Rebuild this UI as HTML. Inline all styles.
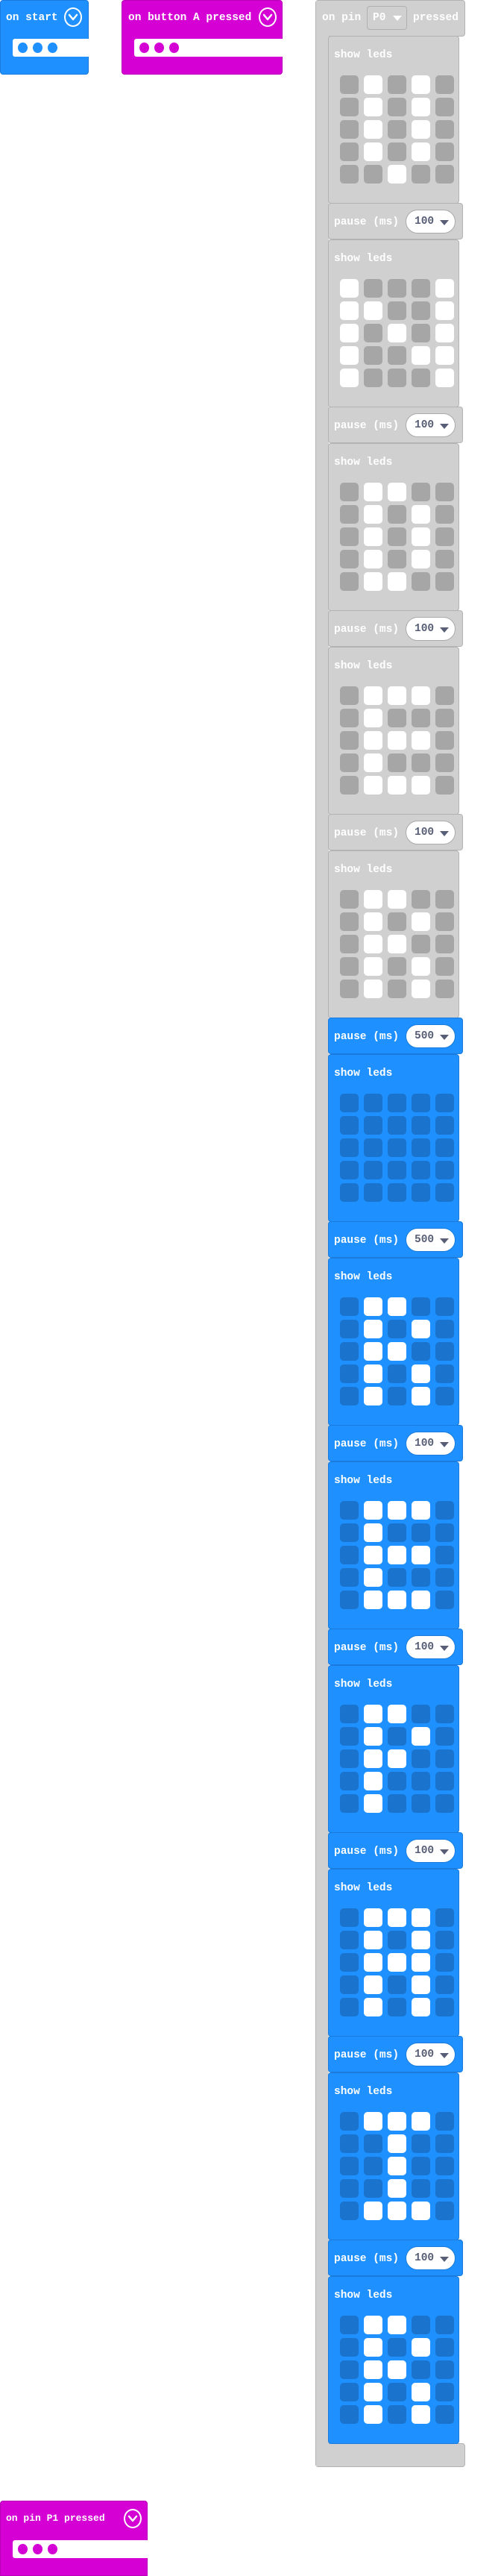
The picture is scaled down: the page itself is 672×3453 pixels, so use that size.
<!DOCTYPE html>
<html><head><meta charset="utf-8"><style>
*{margin:0;padding:0;box-sizing:border-box}
body{width:672px;height:3453px;background:#fff;position:relative;overflow:hidden;font-family:"Liberation Mono",monospace;font-weight:bold;font-size:14.5px;color:#fff}
.a{position:absolute}
.hat{position:absolute;border-radius:4px}
.t{position:absolute;white-space:nowrap;line-height:18px}
.slot{position:absolute;background:#fff;border-radius:3px 0 0 3px}
.dot{position:absolute;width:13px;height:14px;border-radius:50%}
.circ{position:absolute;width:24px;height:26px;border:2.5px solid #fff;border-radius:50%}
.circ svg{position:absolute;left:3px;top:4px}
.g{background:#d0d0d0;border:1px solid #b3b3b3}
.bl{background:#1e90ff;border:1px solid #1a7bdc}
.sl{position:absolute;left:440px;width:176px;height:225px;border-radius:4px}
.pa{position:absolute;left:440px;width:181px;height:49px;border-radius:4px}
.sl .t{left:7px;top:16px}
.pa .t{left:7px;top:16px}
.grid{position:absolute;left:15px;top:52px;display:grid;grid-template-columns:repeat(5,25px);column-gap:7px;row-gap:5px}
.grid i,.grid b{display:block;width:25px;height:25px;border-radius:5px}
.g .grid i{background:#a6a6a6}
.bl .grid i{background:#1a73cc}
.grid b{background:#fff}
.pill{position:absolute;left:103px;top:8px;width:67px;height:32px;border-radius:16px;background:#fff;border:1px solid #aaa}
.bl .pill{border-color:#1a7bdc}
.pill span{position:absolute;left:11px;top:6px;color:#575e75;line-height:18px}
.pill em{position:absolute;left:45px;top:13px;width:0;height:0;border-left:6px solid transparent;border-right:6px solid transparent;border-top:7px solid #575e75}
.notch{position:absolute;left:15px;top:-1px;width:30px;height:7px}
</style></head><body>

<!-- on start -->
<div class="hat" style="left:0;top:0;width:119px;height:100px;background:#1e90ff;border:1px solid #1a7bdc"></div>
<div class="t" style="left:8px;top:15px">on start</div>
<div class="circ" style="left:86px;top:10px"><svg width="14" height="14" viewBox="0 0 14 14"><path d="M2 4 L7 10 L12 4" stroke="#fff" stroke-width="2.5" fill="none" stroke-linecap="round" stroke-linejoin="round"/></svg></div>
<div class="slot" style="left:17px;top:52px;width:102px;height:24px"></div>
<div class="dot" style="left:24px;top:57px;background:#1e90ff"></div>
<div class="dot" style="left:44px;top:57px;background:#1e90ff"></div>
<div class="dot" style="left:64px;top:57px;background:#1e90ff"></div>

<!-- on button A pressed -->
<div class="hat" style="left:163px;top:0;width:216px;height:100px;background:#d400d4;border:1px solid #b800b8"></div>
<div class="t" style="left:172px;top:15px">on button A pressed</div>
<div class="circ" style="left:347px;top:10px"><svg width="14" height="14" viewBox="0 0 14 14"><path d="M2 4 L7 10 L12 4" stroke="#fff" stroke-width="2.5" fill="none" stroke-linecap="round" stroke-linejoin="round"/></svg></div>
<div class="slot" style="left:180px;top:52px;width:199px;height:24px"></div>
<div class="dot" style="left:187px;top:57px;background:#d400d4"></div>
<div class="dot" style="left:207px;top:57px;background:#d400d4"></div>
<div class="dot" style="left:227px;top:57px;background:#d400d4"></div>

<!-- on pin P0 pressed stack -->
<div class="a g" style="left:423px;top:0;width:201px;height:49px;border-radius:4px"></div>
<div class="a g" style="left:423px;top:0;width:18px;height:3307px;border-right:none;border-radius:4px 0 0 4px"></div>
<div class="a g" style="left:423px;top:3275px;width:201px;height:32px;border-radius:0 4px 4px 4px;border-top:1px solid #b3b3b3"></div>
<div class="a" style="left:424px;top:1px;width:17px;height:3305px;background:#d0d0d0"></div>
<div class="t" style="left:432px;top:15px">on pin</div>
<div class="a" style="left:492px;top:8px;width:54px;height:32px;border:1px solid #b0b0b0;border-radius:4px"></div>
<div class="t" style="left:500px;top:15px">P0</div>
<div class="a" style="left:527px;top:21px;width:0;height:0;border-left:6px solid transparent;border-right:6px solid transparent;border-top:7px solid #fff"></div>
<div class="t" style="left:554px;top:15px">pressed</div>

<!-- 1 V -->
<div class="sl g" style="top:48px"><div class="t">show leds</div><div class="grid">
<i></i><b></b><i></i><b></b><i></i>
<i></i><b></b><i></i><b></b><i></i>
<i></i><b></b><i></i><b></b><i></i>
<i></i><b></b><i></i><b></b><i></i>
<i></i><i></i><b></b><i></i><i></i>
</div></div>
<div class="pa g" style="top:272px"><div class="t">pause (ms)</div><div class="pill"><span>100</span><em></em></div></div>

<!-- 2 N -->
<div class="sl g" style="top:321px"><div class="t">show leds</div><div class="grid">
<b></b><i></i><i></i><i></i><b></b>
<b></b><b></b><i></i><i></i><b></b>
<b></b><i></i><b></b><i></i><b></b>
<b></b><i></i><i></i><b></b><b></b>
<b></b><i></i><i></i><i></i><b></b>
</div></div>
<div class="pa g" style="top:545px"><div class="t">pause (ms)</div><div class="pill"><span>100</span><em></em></div></div>

<!-- 3 D -->
<div class="sl g" style="top:594px"><div class="t">show leds</div><div class="grid">
<i></i><b></b><b></b><i></i><i></i>
<i></i><b></b><i></i><b></b><i></i>
<i></i><b></b><i></i><b></b><i></i>
<i></i><b></b><i></i><b></b><i></i>
<i></i><b></b><b></b><i></i><i></i>
</div></div>
<div class="pa g" style="top:818px"><div class="t">pause (ms)</div><div class="pill"><span>100</span><em></em></div></div>

<!-- 4 E -->
<div class="sl g" style="top:867px"><div class="t">show leds</div><div class="grid">
<i></i><b></b><b></b><b></b><i></i>
<i></i><b></b><i></i><i></i><i></i>
<i></i><b></b><b></b><b></b><i></i>
<i></i><b></b><i></i><i></i><i></i>
<i></i><b></b><b></b><b></b><i></i>
</div></div>
<div class="pa g" style="top:1091px"><div class="t">pause (ms)</div><div class="pill"><span>100</span><em></em></div></div>

<!-- 5 R -->
<div class="sl g" style="top:1140px"><div class="t">show leds</div><div class="grid">
<i></i><b></b><b></b><i></i><i></i>
<i></i><b></b><i></i><b></b><i></i>
<i></i><b></b><b></b><i></i><i></i>
<i></i><b></b><i></i><b></b><i></i>
<i></i><b></b><i></i><b></b><i></i>
</div></div>
<div class="pa bl" style="top:1364px"><div class="t">pause (ms)</div><div class="pill"><span>500</span><em></em></div></div>

<!-- 6 blank -->
<div class="sl bl" style="top:1413px"><div class="t">show leds</div><div class="grid">
<i></i><i></i><i></i><i></i><i></i>
<i></i><i></i><i></i><i></i><i></i>
<i></i><i></i><i></i><i></i><i></i>
<i></i><i></i><i></i><i></i><i></i>
<i></i><i></i><i></i><i></i><i></i>
</div></div>
<div class="pa bl" style="top:1637px"><div class="t">pause (ms)</div><div class="pill"><span>500</span><em></em></div></div>

<!-- 7 R -->
<div class="sl bl" style="top:1686px"><div class="t">show leds</div><div class="grid">
<i></i><b></b><b></b><i></i><i></i>
<i></i><b></b><i></i><b></b><i></i>
<i></i><b></b><b></b><i></i><i></i>
<i></i><b></b><i></i><b></b><i></i>
<i></i><b></b><i></i><b></b><i></i>
</div></div>
<div class="pa bl" style="top:1910px"><div class="t">pause (ms)</div><div class="pill"><span>100</span><em></em></div></div>

<!-- 8 E -->
<div class="sl bl" style="top:1959px"><div class="t">show leds</div><div class="grid">
<i></i><b></b><b></b><b></b><i></i>
<i></i><b></b><i></i><i></i><i></i>
<i></i><b></b><b></b><b></b><i></i>
<i></i><b></b><i></i><i></i><i></i>
<i></i><b></b><b></b><b></b><i></i>
</div></div>
<div class="pa bl" style="top:2183px"><div class="t">pause (ms)</div><div class="pill"><span>100</span><em></em></div></div>

<!-- 9 P -->
<div class="sl bl" style="top:2232px"><div class="t">show leds</div><div class="grid">
<i></i><b></b><b></b><i></i><i></i>
<i></i><b></b><i></i><b></b><i></i>
<i></i><b></b><b></b><i></i><i></i>
<i></i><b></b><i></i><i></i><i></i>
<i></i><b></b><i></i><i></i><i></i>
</div></div>
<div class="pa bl" style="top:2456px"><div class="t">pause (ms)</div><div class="pill"><span>100</span><em></em></div></div>

<!-- 10 A -->
<div class="sl bl" style="top:2505px"><div class="t">show leds</div><div class="grid">
<i></i><b></b><b></b><b></b><i></i>
<i></i><b></b><i></i><b></b><i></i>
<i></i><b></b><b></b><b></b><i></i>
<i></i><b></b><i></i><b></b><i></i>
<i></i><b></b><i></i><b></b><i></i>
</div></div>
<div class="pa bl" style="top:2729px"><div class="t">pause (ms)</div><div class="pill"><span>100</span><em></em></div></div>

<!-- 11 I -->
<div class="sl bl" style="top:2778px"><div class="t">show leds</div><div class="grid">
<i></i><b></b><b></b><b></b><i></i>
<i></i><i></i><b></b><i></i><i></i>
<i></i><i></i><b></b><i></i><i></i>
<i></i><i></i><b></b><i></i><i></i>
<i></i><b></b><b></b><b></b><i></i>
</div></div>
<div class="pa bl" style="top:3002px"><div class="t">pause (ms)</div><div class="pill"><span>100</span><em></em></div></div>

<!-- 12 R -->
<div class="sl bl" style="top:3051px"><div class="t">show leds</div><div class="grid">
<i></i><b></b><b></b><i></i><i></i>
<i></i><b></b><i></i><b></b><i></i>
<i></i><b></b><b></b><i></i><i></i>
<i></i><b></b><i></i><b></b><i></i>
<i></i><b></b><i></i><b></b><i></i>
</div></div>

<!-- on pin P1 pressed -->
<div class="hat" style="left:0;top:3352px;width:198px;height:101px;background:#d400d4;border:1px solid #b800b8;border-radius:4px 4px 0 0"></div>
<div class="t" style="left:8px;top:3367px;font-size:13px">on pin P1 pressed</div>
<div class="circ" style="left:166px;top:3363px"><svg width="14" height="14" viewBox="0 0 14 14"><path d="M2 4 L7 10 L12 4" stroke="#fff" stroke-width="2.5" fill="none" stroke-linecap="round" stroke-linejoin="round"/></svg></div>
<div class="slot" style="left:17px;top:3405px;width:181px;height:24px"></div>
<div class="dot" style="left:24px;top:3410px;background:#d400d4"></div>
<div class="dot" style="left:44px;top:3410px;background:#d400d4"></div>
<div class="dot" style="left:64px;top:3410px;background:#d400d4"></div>

</body></html>
